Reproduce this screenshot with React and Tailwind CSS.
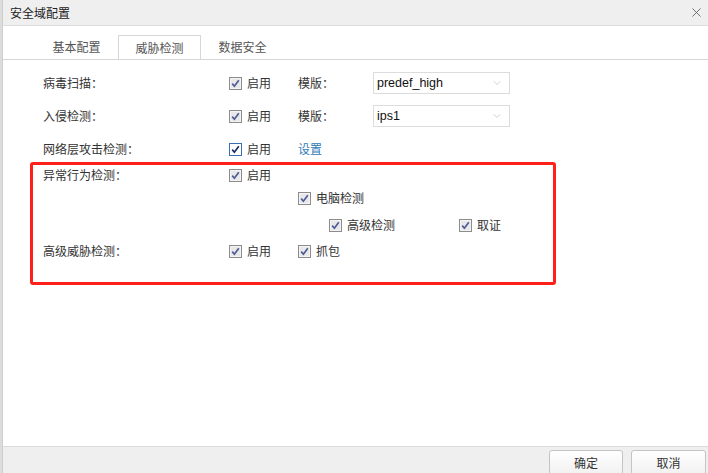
import { ChevronDown, X } from 'lucide-react';

const FONT = { fontFamily: '"Microsoft YaHei", "Noto Sans CJK SC", "Noto Sans", sans-serif' };

function Check({ active = false }) {
  return (
    <svg width="13" height="13" viewBox="0 0 13 13" className="flex-shrink-0">
      <rect
        x="0.5"
        y="0.5"
        width="12"
        height="12"
        fill={active ? '#ffffff' : '#e8e8ea'}
        stroke={active ? '#3c6fb0' : '#8c8c8c'}
      />
      {!active && <rect x="1.5" y="1.5" width="10" height="10" fill="none" stroke="#f4f4f4" />}
      <path
        d="M3.2 6.6 L5.4 9.2 L9.8 3.2"
        fill="none"
        stroke={active ? '#1a2a6a' : '#4d5c94'}
        strokeWidth="1.7"
      />
    </svg>
  );
}

function Toggle({ label, active }) {
  return (
    <span className="flex items-center gap-[5px]">
      <Check active={active} />
      <span>{label}</span>
    </span>
  );
}

function Select({ value }) {
  return (
    <div className="w-[137px] h-[22px] border border-[#dcdcdc] bg-white flex items-center justify-between pl-[3px] pr-[6px] text-[#111]">
      <span style={{ fontFamily: '"Liberation Sans", Arial, sans-serif' }} className="text-[12.5px]">{value}</span>
      <ChevronDown size={12} strokeWidth={1.2} className="text-[#b0b0b0]" />
    </div>
  );
}

function Row({ label, children, pad = 'pl-[40px]' }) {
  return (
    <div className={`flex items-center h-[22px] ${pad}`}>
      <span className="w-[186px]">{label}</span>
      {children}
    </div>
  );
}

export default function App() {
  return (
    <div className="w-[708px] h-[473px] flex bg-white text-[12px] text-[#333] overflow-hidden" style={FONT}>
      <div className="w-[3px] bg-[#dcdcdc] border-r border-[#cfcfcf]" />
      <div className="flex-1 flex flex-col">
        <div className="h-[26px] bg-[#efefef] border-b border-[#dddddd] flex items-center justify-between pl-[7px] pr-[4px]">
          <span className="text-[12px] text-[#222]">安全域配置</span>
          <X size={15} strokeWidth={1.3} className="text-[#555]" />
        </div>

        <div className="pt-[9px] pl-[32px] flex border-b border-[#d6d6d6]">
          <div className="w-[83px] h-[24px] flex items-center justify-center text-[#555]">基本配置</div>
          <div className="w-[83px] h-[24px] flex items-center justify-center text-[#555] border border-b-0 border-[#d6d6d6] bg-white -mb-px">威胁检测</div>
          <div className="w-[83px] h-[24px] flex items-center justify-center text-[#555]">数据安全</div>
        </div>

        <div className="flex-1 pt-[12px] flex flex-col gap-[11px]">
          <Row label="病毒扫描：">
            <span className="w-[69px]"><Toggle label="启用" /></span>
            <span className="w-[75px]">模版：</span>
            <Select value="predef_high" />
          </Row>
          <Row label="入侵检测：">
            <span className="w-[69px]"><Toggle label="启用" /></span>
            <span className="w-[75px]">模版：</span>
            <Select value="ips1" />
          </Row>
          <Row label="网络层攻击检测：">
            <span className="w-[69px]"><Toggle label="启用" active /></span>
            <span className="text-[#2f7bb6]">设置</span>
          </Row>

          <div className="ml-[27px] -mt-[9px] w-[526px] h-[123px] border-[3px] border-[#ff2119] rounded-[3px] flex flex-col">
            <div className="flex items-center h-[20px] pl-[10px]">
              <span className="w-[186px]">异常行为检测：</span>
              <Toggle label="启用" />
            </div>
            <div className="flex items-center h-[20px] mt-[3px] pl-[265px]">
              <Toggle label="电脑检测" />
            </div>
            <div className="flex items-center h-[20px] mt-[7px] pl-[296px]">
              <span className="w-[130px]"><Toggle label="高级检测" /></span>
              <Toggle label="取证" />
            </div>
            <div className="flex items-center h-[20px] mt-[6px] pl-[10px]">
              <span className="w-[186px]">高级威胁检测：</span>
              <span className="w-[69px]"><Toggle label="启用" /></span>
              <Toggle label="抓包" />
            </div>
          </div>
        </div>

        <div className="h-[27px] bg-[#efefef] border-t border-[#dadada] flex justify-end gap-[8px] pr-[2px] pt-[3px]">
          <button className="w-[74px] h-[25px] rounded-[3px] border border-[#c4c4c4] bg-gradient-to-b from-[#ffffff] to-[#f1f1f1] text-[#333] text-[12px]">确定</button>
          <button className="w-[75px] h-[25px] rounded-[3px] border border-[#c4c4c4] bg-gradient-to-b from-[#ffffff] to-[#f1f1f1] text-[#333] text-[12px]">取消</button>
        </div>
      </div>
    </div>
  );
}
